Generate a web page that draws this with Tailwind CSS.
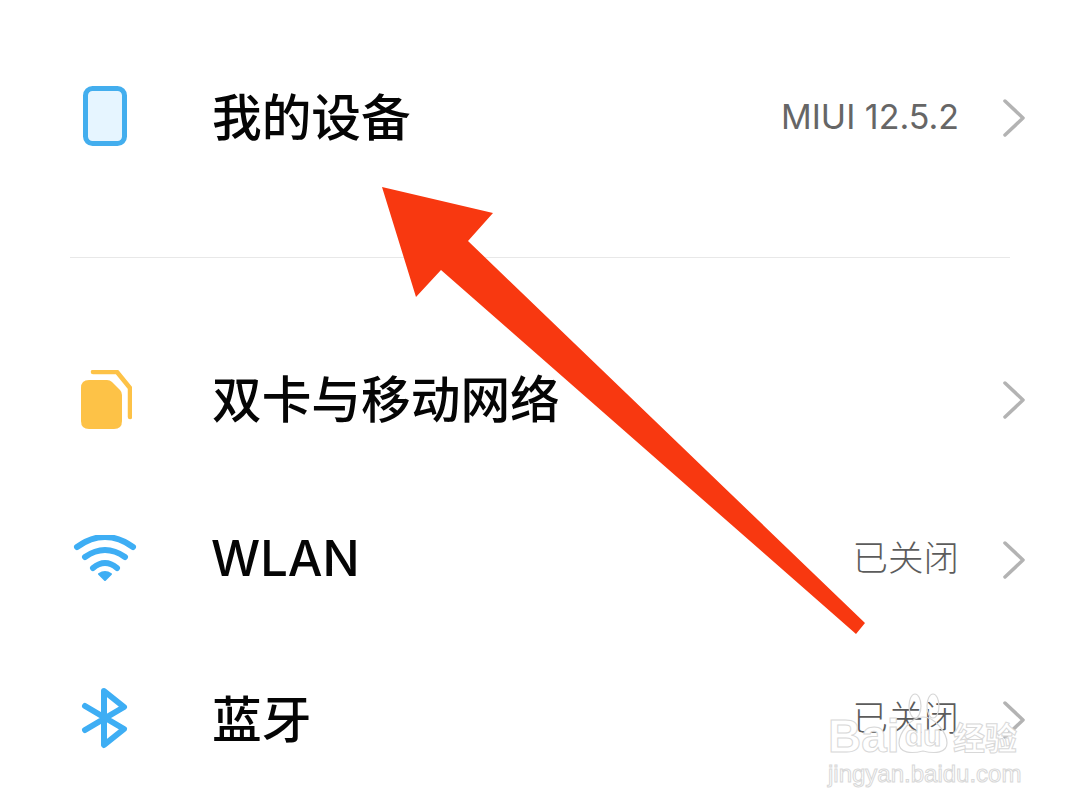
<!DOCTYPE html>
<html lang="zh-CN">
<head>
  <meta charset="UTF-8">
  <script src="https://cdn.jsdelivr.net/npm/@tailwindcss/browser@4"></script>
  <title>设置</title>
</head>
<body class="bg-white">
  <div class="relative w-[1080px] h-[810px] overflow-hidden pt-[38px] font-['Inter','Noto_Sans_CJK_SC',sans-serif]">

    <!-- 我的设备 -->
    <div class="flex items-center h-[160px] pl-[70px] pr-[54px]">
      <div class="w-[70px] flex justify-center pb-[4px]">
        <svg width="44" height="60" viewBox="0 0 44 60"><rect x="2.5" y="2.5" width="39" height="55" rx="7" fill="#e6f5ff" stroke="#43aeee" stroke-width="5"/></svg>
      </div>
      <div class="ml-[72px] pb-[8px] text-[49.7px] font-medium text-[#050505] font-['Noto_Sans_CJK_SC',sans-serif]">我的设备</div>
      <div class="ml-auto pb-[3px] text-[34px] text-[#666]">MIUI 12.5.2</div>
      <svg class="ml-[43px]" width="24" height="38" viewBox="0 0 24 38" fill="none"><path d="M3 2 L21 19 L3 36" stroke="#b3b3b3" stroke-width="3.5" stroke-linecap="round" stroke-linejoin="round"/></svg>
    </div>

    <div class="h-px bg-[#e8e8e8] mx-[70px] mt-[59px] mb-[62px]"></div>

    <!-- 双卡与移动网络 -->
    <div class="flex items-center h-[160px] pl-[70px] pr-[54px]">
      <div class="w-[70px] flex justify-center">
        <svg width="54" height="60" viewBox="0 0 54 60">
          <path d="M11 10 H29 Q32 10 34 12 L42 20 Q44 22 44 25 V51 Q44 59 36 59 H11 Q3 59 3 51 V18 Q3 10 11 10 Z" fill="#fdc247"/>
          <path d="M15 2 H39 L52 18 V47" fill="none" stroke="#fdc247" stroke-width="4.5" stroke-linecap="round" stroke-linejoin="round"/>
        </svg>
      </div>
      <div class="ml-[72px] pb-[8px] text-[49.7px] font-medium text-[#050505] font-['Noto_Sans_CJK_SC',sans-serif]">双卡与移动网络</div>
      <svg class="ml-auto" width="24" height="38" viewBox="0 0 24 38" fill="none"><path d="M3 2 L21 19 L3 36" stroke="#b3b3b3" stroke-width="3.5" stroke-linecap="round" stroke-linejoin="round"/></svg>
    </div>

    <!-- WLAN -->
    <div class="flex items-center h-[160px] pl-[70px] pr-[54px]">
      <div class="w-[70px] flex justify-center">
        <svg width="64" height="50" viewBox="0 0 64 50" fill="none" stroke="#3eaef4" stroke-width="6" stroke-linecap="round">
          <path d="M4 12 Q32 -8 60 12"/>
          <path d="M12 22 Q32 8 52 22"/>
          <path d="M20 33 Q32 23 44 33"/>
          <path d="M26 39 Q32 35 38 39 L32 45 Z" fill="#3eaef4" stroke-width="2" stroke-linejoin="round"/>
        </svg>
      </div>
      <div class="ml-[71px] pb-[2px] text-[49px] font-medium text-[#050505]">WLAN</div>
      <div class="ml-auto pb-[8px] text-[35.5px] text-[#5c5c5c] font-['Noto_Sans_CJK_SC',sans-serif] font-light">已关闭</div>
      <svg class="ml-[43px]" width="24" height="38" viewBox="0 0 24 38" fill="none"><path d="M3 2 L21 19 L3 36" stroke="#b3b3b3" stroke-width="3.5" stroke-linecap="round" stroke-linejoin="round"/></svg>
    </div>

    <!-- 蓝牙 -->
    <div class="flex items-center h-[160px] pl-[70px] pr-[54px]">
      <div class="w-[70px] flex justify-center pb-[4px]">
        <svg width="48" height="62" viewBox="0 0 48 62" fill="none" stroke="#3eaef4" stroke-width="6" stroke-linecap="round" stroke-linejoin="round">
          <path d="M4 19 L43 42 L23 58 V4 L43 20 L4 43"/>
        </svg>
      </div>
      <div class="ml-[72px] pb-[8px] text-[49.7px] font-medium text-[#050505] font-['Noto_Sans_CJK_SC',sans-serif]">蓝牙</div>
      <div class="ml-auto pb-[8px] text-[35.5px] text-[#5c5c5c] font-['Noto_Sans_CJK_SC',sans-serif] font-light">已关闭</div>
      <svg class="ml-[43px]" width="24" height="38" viewBox="0 0 24 38" fill="none"><path d="M3 2 L21 19 L3 36" stroke="#b3b3b3" stroke-width="3.5" stroke-linecap="round" stroke-linejoin="round"/></svg>
    </div>

    <!-- red arrow annotation -->
    <svg class="absolute left-0 top-0" width="1080" height="810" viewBox="0 0 1080 810">
      <polygon points="382,187 493,213 468,241 865,623 856,634 441,270 416,297" fill="#f83810"/>
    </svg>

    <!-- watermark -->
    <div class="absolute left-[828px] top-[716px] w-[200px] text-white [-webkit-text-stroke:1px_#d8d8d8]">
      <div class="flex items-center h-[40px] font-['Liberation_Sans',sans-serif] font-bold text-[46px] leading-none">
        <span class="w-[68px]">Bai</span>
        <span class="relative ml-[1px] text-[30px] w-[52px] text-center">
          <svg class="absolute left-0 -top-[28px]" width="52" height="62" viewBox="0 0 52 62" fill="none" stroke="#d8d8d8" stroke-width="1.2">
            <ellipse cx="18" cy="13" rx="6" ry="12"/><ellipse cx="36" cy="13" rx="6" ry="12"/>
            <path d="M26 24 C38 24 50 40 50 50 C50 60 38 61 26 58 C14 61 2 60 2 50 C2 40 14 24 26 24 Z"/>
          </svg>
          <span class="relative">du</span>
        </span>
        <span class="ml-[4px] text-[32px] font-['Noto_Sans_CJK_SC',sans-serif]">经验</span>
      </div>
      <div class="mt-[6px] text-[24px] leading-none font-['Liberation_Sans',sans-serif] whitespace-nowrap">jingyan.baidu.com</div>
    </div>
  </div>
</body>
</html>
